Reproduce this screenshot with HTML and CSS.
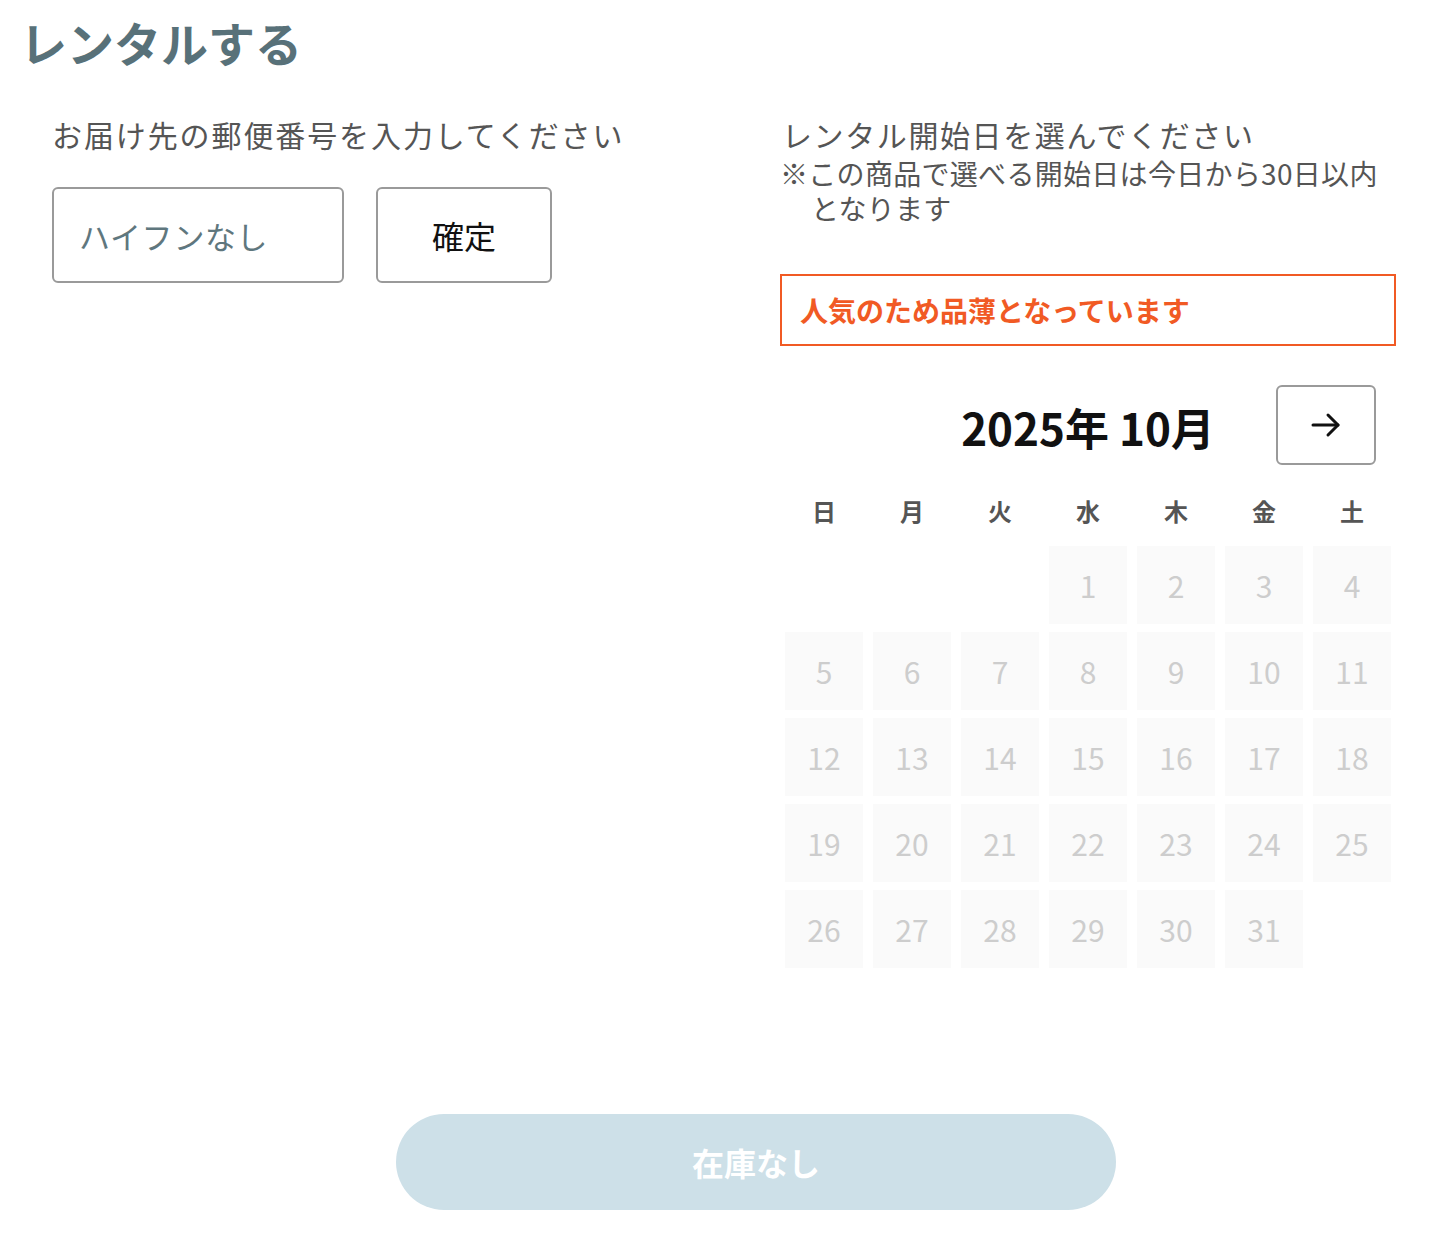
FILE: index.html
```html
<!DOCTYPE html>
<html lang="ja">
<head>
<meta charset="utf-8">
<title>レンタルする</title>
<link rel="stylesheet" href="styles.css">
</head>
<body>
<h1 class="title">レンタルする</h1>
<div class="columns">
  <section class="col-left">
    <p class="label">お届け先の郵便番号を入力してください</p>
    <div class="zip-row">
      <input class="zip-input" type="text" placeholder="ハイフンなし">
      <button class="zip-btn" type="button">確定</button>
    </div>
  </section>
  <section class="col-right">
    <p class="label">レンタル開始日を選んでください</p>
    <p class="note"><span class="note-line">※この商品で選べる開始日は今日から30日以内</span><span class="note-line note-cont">となります</span></p>
    <div class="alert">人気のため品薄となっています</div>
    <div class="calendar">
      <div class="cal-head">
        <span class="cal-spacer"></span>
        <span class="cal-month">2025年 10月</span>
        <button class="cal-next" type="button" aria-label="次の月">
          <svg width="34" height="34" viewBox="0 0 34 34" fill="none" stroke="#111" stroke-width="3" stroke-linecap="round" stroke-linejoin="round"><path d="M4 17H29"/><path d="M19 7L29 17L19 27"/></svg>
        </button>
      </div>
      <div class="weekdays">
        <span>日</span><span>月</span><span>火</span><span>水</span><span>木</span><span>金</span><span>土</span>
      </div>
      <div class="days">
        <span class="blank"></span><span class="blank"></span><span class="blank"></span>
        <span class="day">1</span><span class="day">2</span><span class="day">3</span><span class="day">4</span>
        <span class="day">5</span><span class="day">6</span><span class="day">7</span><span class="day">8</span><span class="day">9</span><span class="day">10</span><span class="day">11</span>
        <span class="day">12</span><span class="day">13</span><span class="day">14</span><span class="day">15</span><span class="day">16</span><span class="day">17</span><span class="day">18</span>
        <span class="day">19</span><span class="day">20</span><span class="day">21</span><span class="day">22</span><span class="day">23</span><span class="day">24</span><span class="day">25</span>
        <span class="day">26</span><span class="day">27</span><span class="day">28</span><span class="day">29</span><span class="day">30</span><span class="day">31</span>
      </div>
    </div>
  </section>
</div>
<div class="footer">
  <button class="submit" type="button" disabled>在庫なし</button>
</div>
</body>
</html>
```

FILE: styles.css
```css
* { box-sizing: border-box; }
body {
  margin: 0;
  background: #fff;
  font-family: "Noto Sans CJK JP", "Noto Sans", sans-serif;
  color: #555;
}
.title {
  margin: 0;
  padding: 14px 0 0 20px;
  font-size: 47px;
  line-height: 56px;
  font-weight: 700;
  color: #587179;
}
.columns {
  display: flex;
  padding-left: 52px;
  margin-top: 44px;
}
.col-left { flex: 0 0 728px; }
.col-right { flex: 0 0 616px; }
.label {
  margin: 0;
  font-size: 30px;
  line-height: 40px;
  letter-spacing: 1.9px;
  color: #555;
}
.col-right .label { padding-left: 2px; letter-spacing: 1.6px; }
.zip-row {
  display: flex;
  gap: 32px;
  margin-top: 33px;
}
.zip-input {
  width: 292px;
  height: 96px;
  border: 2px solid #9a9a9a;
  border-radius: 6px;
  padding: 0 0 0 25px;
  font-family: inherit;
  font-size: 31px;
  letter-spacing: 0.5px;
  color: #333;
  outline: none;
}
.zip-input::placeholder { color: #5f777e; }
.zip-btn {
  width: 176px;
  height: 96px;
  border: 2px solid #9a9a9a;
  border-radius: 6px;
  background: #fff;
  font-family: inherit;
  font-size: 32px;
  color: #111;
  padding: 0;
}
.note {
  margin: 2px 0 0;
  font-size: 28px;
  letter-spacing: 0.3px;
  color: #555;
}
.note-line {
  display: block;
  height: 35px;
  line-height: 35px;
}
.note-cont { padding-left: 31px; }
.alert {
  margin-top: 48px;
  height: 72px;
  border: 2px solid #f15a24;
  display: flex;
  align-items: center;
  padding-left: 18px;
  font-size: 28px;
  font-weight: 700;
  color: #f15a24;
}
.calendar {
  margin: 39px 0 0 5px;
  width: 606px;
}
.cal-head {
  display: grid;
  grid-template-columns: 1fr auto 1fr;
  align-items: center;
  height: 80px;
}
.cal-month {
  font-size: 44px;
  font-weight: 700;
  color: #111;
  line-height: 1;
  padding-top: 3px;
}
.cal-next {
  justify-self: end;
  margin-right: 15px;
  width: 100px;
  height: 80px;
  border: 2px solid #9a9a9a;
  border-radius: 6px;
  background: #fff;
  display: flex;
  align-items: center;
  justify-content: center;
  padding: 0;
}
.weekdays {
  display: grid;
  grid-template-columns: repeat(7, 78px);
  column-gap: 10px;
  margin-top: 30px;
  font-size: 24px;
  line-height: 32px;
  font-weight: 700;
  color: #555;
  text-align: center;
}
.days {
  display: grid;
  grid-template-columns: repeat(7, 78px);
  grid-auto-rows: 78px;
  column-gap: 10px;
  row-gap: 8px;
  margin-top: 19px;
}
.day {
  background: #fafafa;
  display: flex;
  align-items: center;
  justify-content: center;
  font-size: 30px;
  color: #cdcdcd;
}
.footer {
  padding-left: 396px;
  margin-top: 146px;
}
.submit {
  width: 720px;
  height: 96px;
  border: none;
  border-radius: 48px;
  background: #cde0e8;
  color: #fff;
  font-family: inherit;
  font-size: 32px;
  font-weight: 700;
  padding: 0;
}
```
